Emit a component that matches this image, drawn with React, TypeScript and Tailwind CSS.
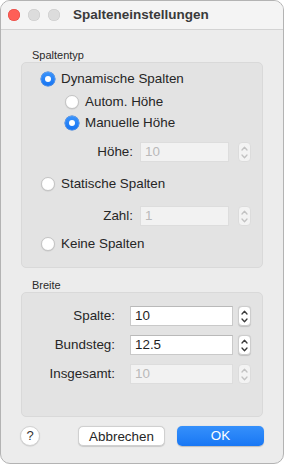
import React from 'react';

const FONT = "font-['Liberation_Sans','Helvetica_Neue',Arial,sans-serif]";

function Radio({ checked, label }: { checked?: boolean; label: string }) {
  return (
    <div className="flex h-[18px] items-center gap-[6px]">
      {checked ? (
        <span className="flex h-[14px] w-[14px] items-center justify-center rounded-full bg-gradient-to-b from-[#3a93fb] to-[#1574f2] shadow-[0_0_0_0.5px_#1266d8]">
          <span className="h-[6px] w-[6px] rounded-full bg-white" />
        </span>
      ) : (
        <span className="h-[14px] w-[14px] rounded-full border border-[#c4c4c4] bg-white shadow-[0_0.5px_1px_rgba(0,0,0,0.12)]" />
      )}
      <span className="text-[13.4px] leading-[18px] text-[#262626]">{label}</span>
    </div>
  );
}

function Stepper({ disabled }: { disabled?: boolean }) {
  const stroke = disabled ? '#c2c2c2' : '#3a3a3a';
  return (
    <div
      className={`flex h-[20px] w-[13px] flex-col items-center justify-center gap-[3px] rounded-[4px] border ${
        disabled ? 'border-[#dcdcdc] bg-[#f3f3f3]' : 'border-[#cdcdcd] bg-white shadow-[0_0.5px_1px_rgba(0,0,0,0.15)]'
      }`}
    >
      <svg width="7" height="5" viewBox="0 0 7 5">
        <path d="M1 4 L3.5 1.3 L6 4" fill="none" stroke={stroke} strokeWidth="1.3" strokeLinecap="round" strokeLinejoin="round" />
      </svg>
      <svg width="7" height="5" viewBox="0 0 7 5">
        <path d="M1 1 L3.5 3.7 L6 1" fill="none" stroke={stroke} strokeWidth="1.3" strokeLinecap="round" strokeLinejoin="round" />
      </svg>
    </div>
  );
}

function Field({ value, disabled, width }: { value: string; disabled?: boolean; width: string }) {
  return (
    <div
      className={`flex h-[20px] ${width} items-center border px-[4px] text-[13.4px] ${
        disabled
          ? 'border-[#dddddd] bg-[#f2f2f2] text-[#b9b9b9]'
          : 'border-[#c9c9c9] border-t-[#b9b9b9] bg-white text-[#1f1f1f]'
      }`}
    >
      {value}
    </div>
  );
}

export default function App() {
  return (
    <div className={`h-[464px] w-[284px] bg-white ${FONT}`}>
      <div className="flex h-full w-full flex-col overflow-hidden rounded-[10px] border border-[#b3b3b3] bg-[#ececec]">
        {/* title bar */}
        <div className="relative flex h-[29px] shrink-0 items-center border-b border-[#d3d3d3] bg-[#f4f4f4] pl-[7px]">
          <div className="flex gap-[8px]">
            <span className="h-[12px] w-[12px] rounded-full bg-[#fe5f57] shadow-[inset_0_0_0_0.5px_#e0443e]" />
            <span className="h-[12px] w-[12px] rounded-full bg-[#dcdcdc] shadow-[inset_0_0_0_0.5px_#c8c8c8]" />
            <span className="h-[12px] w-[12px] rounded-full bg-[#dcdcdc] shadow-[inset_0_0_0_0.5px_#c8c8c8]" />
          </div>
          <span className="ml-[13px] text-[13.5px] font-bold text-[#3a3a3a]">Spalteneinstellungen</span>
        </div>

        <div className="flex flex-col px-[20px] pt-[19px]">
          <div className="pl-[11px] text-[11px] leading-[13px] text-[#2a2a2a]">Spaltentyp</div>
          <div className="flex flex-col rounded-[5px] border border-[#d9d9d9] bg-[#e3e3e3] pb-[14px] pl-[19px] pt-[7px]">
            <Radio checked label="Dynamische Spalten" />
            <div className="mt-[5px] pl-[24px]">
              <Radio label="Autom. Höhe" />
            </div>
            <div className="mt-[3px] pl-[24px]">
              <Radio checked label="Manuelle Höhe" />
            </div>
            <div className="mt-[10px] flex items-center">
              <span className="w-[92px] text-right text-[13.4px] text-[#262626]">Höhe:</span>
              <div className="ml-[7px]">
                <Field value="10" disabled width="w-[89px]" />
              </div>
              <div className="ml-[9px]">
                <Stepper disabled />
              </div>
            </div>
            <div className="mt-[13px]">
              <Radio label="Statische Spalten" />
            </div>
            <div className="mt-[13px] flex items-center">
              <span className="w-[92px] text-right text-[13.4px] text-[#262626]">Zahl:</span>
              <div className="ml-[7px]">
                <Field value="1" disabled width="w-[89px]" />
              </div>
              <div className="ml-[9px]">
                <Stepper disabled />
              </div>
            </div>
            <div className="mt-[9px]">
              <Radio label="Keine Spalten" />
            </div>
          </div>

          <div className="mt-[11px] pl-[11px] text-[11px] leading-[13px] text-[#2a2a2a]">Breite</div>
          <div className="flex flex-col gap-[9px] rounded-[5px] border border-[#d9d9d9] bg-[#e3e3e3] pb-[31px] pt-[13px]">
            {[
              { label: 'Spalte:', value: '10' },
              { label: 'Bundsteg:', value: '12.5' },
              { label: 'Insgesamt:', value: '10', disabled: true },
            ].map((row) => (
              <div key={row.label} className="flex items-center">
                <span className="w-[93px] text-right text-[13.4px] text-[#262626]">{row.label}</span>
                <div className="ml-[15px]">
                  <Field value={row.value} disabled={row.disabled} width="w-[103px]" />
                </div>
                <div className="ml-[5px]">
                  <Stepper disabled={row.disabled} />
                </div>
              </div>
            ))}
          </div>
        </div>

        {/* buttons */}
        <div className="mt-[9px] flex items-center px-[19px]">
          <span className="flex h-[20px] w-[20px] items-center justify-center rounded-full border border-[#d2d2d2] bg-white text-[13px] text-[#333] shadow-[0_0.5px_1px_rgba(0,0,0,0.15)]">
            ?
          </span>
          <div className="ml-auto flex gap-[12px]">
            <button className="h-[20px] w-[87px] rounded-[5px] border border-[#d0d0d0] bg-white text-[13.4px] text-[#262626] shadow-[0_0.5px_1px_rgba(0,0,0,0.15)]">
              Abbrechen
            </button>
            <button className="h-[20px] w-[87px] rounded-[5px] bg-gradient-to-b from-[#3590fb] to-[#1877f4] text-[13.4px] text-white shadow-[0_0.5px_1px_rgba(0,0,0,0.2)]">
              OK
            </button>
          </div>
        </div>
      </div>
    </div>
  );
}
